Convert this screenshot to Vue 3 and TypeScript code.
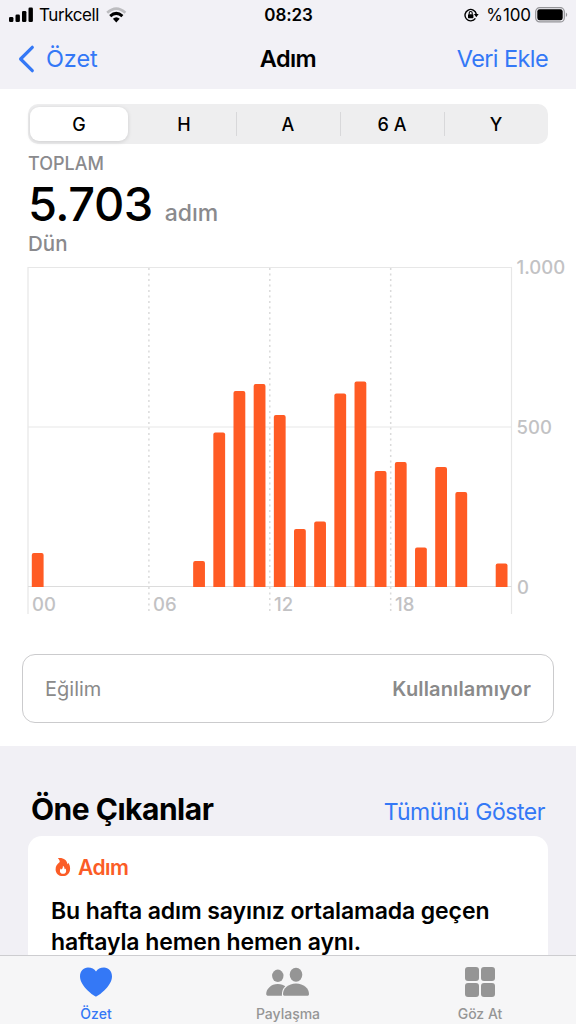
<script setup lang="ts">
import { ref } from 'vue'

const ranges = ['G', 'H', 'A', '6 A', 'Y']
const activeRange = ref(0)

// top edge of each bar in chart coordinates, the baseline is at y = 320
const bars: { hour: number; top: number }[] = [
  { hour: 0, top: 286 },
  { hour: 8, top: 294 },
  { hour: 9, top: 165.5 },
  { hour: 10, top: 124 },
  { hour: 11, top: 117 },
  { hour: 12, top: 148 },
  { hour: 13, top: 262 },
  { hour: 14, top: 254.5 },
  { hour: 15, top: 126.5 },
  { hour: 16, top: 114.5 },
  { hour: 17, top: 204 },
  { hour: 18, top: 195 },
  { hour: 19, top: 280.5 },
  { hour: 20, top: 200 },
  { hour: 21, top: 225 },
  { hour: 23, top: 296.5 },
]

const hourLabels = ['00', '06', '12', '18']

function barX(hour: number) {
  return 31.8 + hour * 20.17
}

function barPath(hour: number, top: number) {
  const x = barX(hour)
  return `M${x} 320V${top + 2}q0-2 2-2h7.8q2 0 2 2V320z`
}
</script>

<template>
  <div class="screen">
    <header class="top">
      <div class="status">
        <div class="status-left">
          <svg class="signal" width="25" height="16" viewBox="0 0 25 16">
            <rect x="0" y="10" width="4.4" height="5" rx="1.3" />
            <rect x="6.5" y="7.5" width="4.4" height="7.5" rx="1.3" />
            <rect x="13" y="4" width="4.4" height="11" rx="1.3" />
            <rect x="19.5" y="0.5" width="4.4" height="14.5" rx="1.3" />
          </svg>
          <span class="carrier">Turkcell</span>
          <svg class="wifi" width="21" height="16" viewBox="0 0 21 16">
            <path d="M1.2 5.8Q10.3-2.6 19.4 5.8" fill="none" stroke="#bdbdc0" stroke-width="2.6" />
            <path d="M4.2 9.1Q10.3 3.6 16.4 9.1" fill="none" stroke="#000" stroke-width="3" />
            <path d="M6.9 11.8Q10.3 8.8 13.7 11.8L10.3 15.4z" />
          </svg>
        </div>
        <span class="clock">08:23</span>
        <div class="status-right">
          <svg class="lock" width="15" height="14" viewBox="0 0 15 14">
            <path d="M11.4 10.4A5.7 5.7 0 1 1 12.300 6" fill="none" stroke="#000" stroke-width="1.4" />
            <path d="M9.900 6h4.800l-2.400 3.300z" />
            <rect x="4" y="6.200" width="5.400" height="4" rx=".6" />
            <path d="M5.200 6.400V5a1.500 1.500 0 0 1 3 0v1.400" fill="none" stroke="#000" stroke-width="1.100" />
          </svg>
          <span class="percent">%100</span>
          <svg class="battery" width="33" height="16" viewBox="0 0 33 16">
            <rect x=".7" y=".7" width="28.6" height="14.2" rx="4" fill="none" stroke="#949498" stroke-width="1.2" />
            <rect x="2.300" y="2.300" width="25.400" height="11" rx="2.300" />
            <path d="M30.900 5.500q2.600 2.200 0 4.600z" fill="#949498" />
          </svg>
        </div>
      </div>
      <nav class="nav">
        <a class="back">
          <svg width="17" height="28" viewBox="0 0 17 28">
            <path d="M14.300 2.300L2.600 14l11.700 11.700" fill="none" stroke="#3478f6" stroke-width="3.200" stroke-linecap="round" stroke-linejoin="round" />
          </svg>
          <span class="back-text">Özet</span>
        </a>
        <h1 class="title">Adım</h1>
        <a class="add">Veri Ekle</a>
      </nav>
    </header>

    <main class="content">
      <div class="segments">
        <button
          v-for="(r, i) in ranges"
          :key="r"
          class="segment"
          :class="{ active: i === activeRange, divided: i > 1 && i !== activeRange }"
          @click="activeRange = i"
        >
          {{ r }}
        </button>
      </div>

      <section class="summary">
        <div class="caption">TOPLAM</div>
        <div class="total"><span class="value">5.703</span><span class="unit">adım</span></div>
        <div class="day">Dün</div>
      </section>

      <svg class="chart" width="576" height="360" viewBox="0 0 576 360">
        <g fill="none" stroke="#e7e7e7" stroke-width="1.2">
          <path d="M28 347V.5H511.500V347" />
          <path d="M28 160H511.500" />
          <path d="M28 319.500H511.500" stroke="#dcdcdc" />
        </g>
        <g stroke="#dadada" stroke-width="1.500" stroke-dasharray="2 3.500">
          <path v-for="n in 3" :key="n" :d="`M${28 + n * 120.9} 1V344`" />
        </g>
        <path v-for="b in bars" :key="b.hour" class="bar" :d="barPath(b.hour, b.top)" />
        <text v-for="(label, i) in hourLabels" :key="label" class="axis" :x="32 + i * 121" y="343.500">{{ label }}</text>
        <text class="axis" x="516.500" y="7">1.000</text>
        <text class="axis" x="516.500" y="166.500">500</text>
        <text class="axis" x="517" y="326.500">0</text>
      </svg>

      <div class="trend">
        <span class="trend-name">Eğilim</span>
        <span class="trend-value">Kullanılamıyor</span>
      </div>
    </main>

    <section class="highlights">
      <div class="highlights-head">
        <h2 class="heading">Öne Çıkanlar</h2>
        <a class="show-all">Tümünü Göster</a>
      </div>
      <article class="card">
        <div class="card-head">
          <svg width="16" height="20" viewBox="0 0 16 20">
            <path d="M2.800 1.200C7.500.200 12.300 2.800 12.300 7.200c.5-.3.800-.8.900-1.400 1.200 1.500 1.900 3.500 1.900 5.600 0 4.700-3 7.700-7.300 7.700S.600 16.200.600 12.200c0-2.900 1.500-5 3.900-6.900C5.200 4.200 4.400 2.500 2.800 1.200z" fill="#fb5c26" />
            <path d="M7.900 8.800c1.500.9 1.700 2.300 1.600 3.500.5-.1.800-.4 1-.9 1.500 2.600.3 5.400-2.400 5.400-2 0-3.200-1.300-3.200-2.900 0-1 .4-1.800 1-2.300.1.500.4.800.8.900.8-.9 1.300-2 1.200-3.700z" fill="#fff" />
          </svg>
          <span class="card-title">Adım</span>
        </div>
        <p class="card-text">Bu hafta adım sayınız ortalamada geçen<br />haftayla hemen hemen aynı.</p>
      </article>
    </section>

    <footer class="tabs">
      <a class="tab selected">
        <svg width="34" height="32" viewBox="0 0 34 32">
          <path d="M17 30.500C15.500 30.500 1 20.500 1 10.500 1 5.200 4.500 1.500 9 1.500c3.600 0 6.400 1.400 8 4 1.600-2.600 4.400-4 8-4 4.500 0 8 3.700 8 9 0 10-14.500 20-16 20z" />
        </svg>
        <span class="tab-name">Özet</span>
      </a>
      <a class="tab">
        <svg width="44" height="32" viewBox="0 0 44 32">
          <ellipse cx="11.800" cy="9.800" rx="5.700" ry="6.200" />
          <path d="M.2 28c0-5 4.800-10 11.600-10 3.600 0 6 1.200 7.500 2.300-2.500 2-3.400 5.200-3.400 8.700a2 2 0 0 0 .2.800H2.500C1 29.800.2 29.200.2 28z" />
          <ellipse cx="30" cy="8.800" rx="6.300" ry="7" />
          <path d="M17 28c0-5.300 5.200-10.500 13-10.500s13 5.200 13 10.500c0 1.300-.8 1.800-2.300 1.800H19.300c-1.500 0-2.300-.5-2.300-1.800z" />
        </svg>
        <span class="tab-name">Paylaşma</span>
      </a>
      <a class="tab">
        <svg width="32" height="32" viewBox="0 0 32 32">
          <rect x="1" y="1" width="14" height="14" rx="3" />
          <rect x="17" y="1" width="14" height="14" rx="3" />
          <rect x="1" y="17" width="14" height="14" rx="3" />
          <rect x="17" y="17" width="14" height="14" rx="3" />
        </svg>
        <span class="tab-name">Göz At</span>
      </a>
    </footer>
  </div>
</template>

<style>
body {
  margin: 0;
  overflow: hidden;
}
</style>

<style scoped>
.screen {
  width: 576px;
  height: 1024px;
  display: flex;
  flex-direction: column;
  overflow: hidden;
  background: #f1f0f5;
  font-family: Inter, sans-serif;
  color: #000;
}

.top {
  height: 89px;
  flex: none;
  background: #f2f1f6;
}

.status {
  display: grid;
  grid-template-columns: 1fr auto 1fr;
  align-items: center;
  height: 30px;
  padding: 0 8px 0 9px;
  font-size: 17px;
}

.status-left,
.status-right {
  display: flex;
  align-items: center;
}

.status-right {
  justify-content: flex-end;
}

.carrier {
  margin-left: 5px;
  letter-spacing: -0.4px;
}

.wifi {
  margin-left: 7px;
}

.clock {
  font-weight: 600;
  letter-spacing: -0.1px;
}

.lock {
  margin-right: 7px;
}

.percent {
  letter-spacing: -0.1px;
}

.battery {
  margin-left: 4px;
}

.nav {
  display: grid;
  grid-template-columns: 1fr auto 1fr;
  align-items: center;
  height: 57px;
  padding: 0 18px;
  font-size: 23.5px;
  letter-spacing: -0.6px;
}

.back {
  display: flex;
  align-items: center;
  color: #3478f6;
}

.back-text {
  margin-left: 11px;
  letter-spacing: -0.1px;
}

.title {
  margin: 0;
  font-size: 23.5px;
  font-weight: 600;
}

.add {
  margin-right: 10px;
  color: #3478f6;
  text-align: right;
}

.content {
  flex: none;
  height: 657px;
  display: flex;
  flex-direction: column;
  background: #fff;
}

.segments {
  display: grid;
  grid-template-columns: repeat(5, 1fr);
  flex: none;
  height: 40px;
  margin: 15px 28px 0;
  border-radius: 10px;
  background: #eeeeef;
}

.segment {
  position: relative;
  border: none;
  padding: 0;
  background: none;
  font-family: inherit;
  font-size: 18px;
  font-weight: 500;
  color: #000;
}

.segment.active {
  margin: 3px 4px 3px 2px;
  border-radius: 9px;
  background: #fff;
  box-shadow: 0 1px 4px rgba(0, 0, 0, 0.14);
}

.segment.divided::before {
  content: '';
  position: absolute;
  left: 0;
  top: 8px;
  bottom: 8px;
  width: 1px;
  background: #d8d8da;
}

.summary {
  flex: none;
  height: 123px;
  padding-left: 28px;
  color: #8a8a8d;
}

.caption {
  padding-top: 9px;
  font-size: 18px;
  line-height: 22px;
  font-weight: 500;
}

.total {
  display: flex;
  align-items: baseline;
  height: 58px;
  line-height: 58px;
}

.value {
  font-size: 47px;
  font-weight: 500;
  letter-spacing: -0.5px;
  color: #000;
}

.unit {
  margin-left: 12px;
  font-size: 23px;
  font-weight: 500;
}

.day {
  padding-top: 1px;
  font-size: 20.5px;
  line-height: 20px;
  font-weight: 500;
}

.chart {
  flex: none;
  display: block;
  overflow: visible;
}

.bar {
  fill: #ff5b24;
}

.axis {
  font-size: 18.5px;
  font-weight: 500;
  fill: #c2c2c4;
}

.trend {
  display: flex;
  align-items: center;
  justify-content: space-between;
  box-sizing: border-box;
  flex: none;
  height: 69px;
  margin: 27px 22px 0;
  padding: 0 22px;
  border: 1px solid #cbcbcd;
  border-radius: 13px;
  font-size: 20px;
  color: #8a8a8a;
}

.trend-value {
  font-weight: 600;
  letter-spacing: 0.15px;
}

.highlights {
  flex: 1;
  min-height: 0;
  overflow: hidden;
  padding: 0 28px;
}

.highlights-head {
  display: flex;
  align-items: baseline;
  justify-content: space-between;
  height: 90px;
  padding: 0 3px;
  line-height: 126px;
}

.heading {
  margin: 0;
  font-size: 30px;
  font-weight: 700;
  letter-spacing: -0.5px;
}

.show-all {
  font-size: 23px;
  letter-spacing: -0.45px;
  color: #3478f6;
}

.card {
  height: 140px;
  padding: 16px 23px;
  border-radius: 14px;
  background: #fff;
}

.card-head {
  display: flex;
  align-items: center;
  height: 30px;
  padding-left: 4px;
}

.card-title {
  margin-left: 7px;
  font-size: 21px;
  font-weight: 600;
  letter-spacing: -0.5px;
  color: #fb5c26;
}

.card-text {
  margin: 14px 0 0;
  font-size: 23px;
  line-height: 30.5px;
  font-weight: 600;
  letter-spacing: -0.1px;
  white-space: nowrap;
}

.tabs {
  display: flex;
  flex: none;
  box-sizing: border-box;
  height: 69px;
  border-top: 1px solid #cdcdd0;
  background: #f6f6f7;
}

.tab {
  flex: 1;
  display: flex;
  flex-direction: column;
  align-items: center;
  padding-top: 10px;
  color: #959595;
  fill: currentColor;
}

.tab.selected {
  color: #3478f6;
}

.tab-name {
  margin-top: 7px;
  font-size: 14px;
  line-height: 18px;
  font-weight: 500;
}
</style>
